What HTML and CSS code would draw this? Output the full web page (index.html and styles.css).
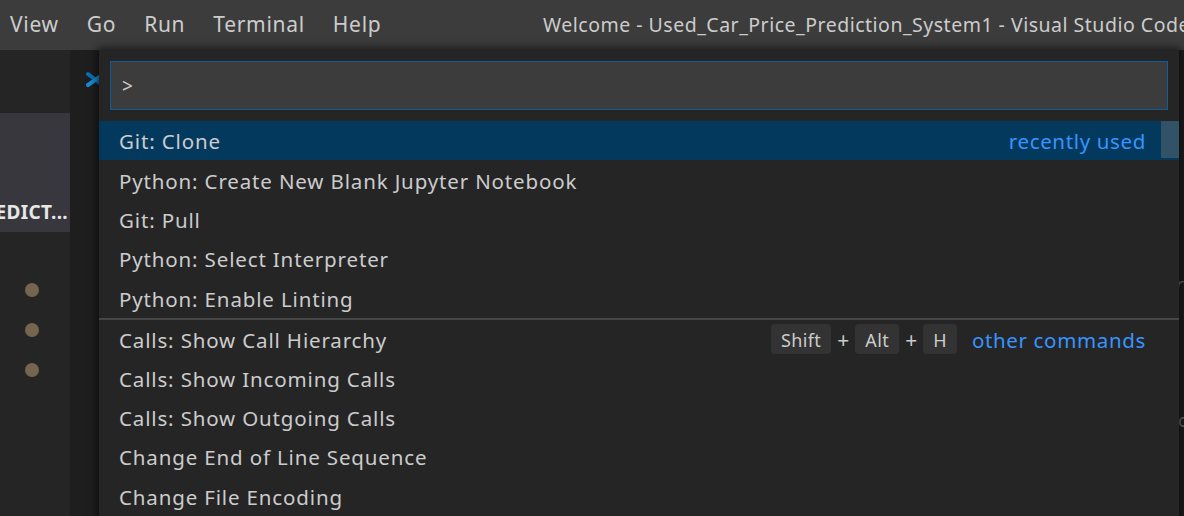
FILE: index.html
```html
<!DOCTYPE html>
<html>
<head>
<meta charset="utf-8">
<link rel="stylesheet" href="styles.css">
</head>
<body>
<div class="titlebar">
  <nav class="menu">
    <span class="menu-item">View</span>
    <span class="menu-item">Go</span>
    <span class="menu-item">Run</span>
    <span class="menu-item">Terminal</span>
    <span class="menu-item">Help</span>
  </nav>
  <div class="title">Welcome - Used_Car_Price_Prediction_System1 - Visual Studio Code</div>
</div>
<div class="main">
  <aside class="sidebar">
    <div class="folder-tab"><span class="folder-name">USED_CAR_PRICE_PREDICT...</span></div>
    <div class="dots">
      <span class="dot"></span>
      <span class="dot"></span>
      <span class="dot"></span>
    </div>
  </aside>
  <section class="editor">
    <svg class="logo" width="16" height="18" viewBox="0 0 16 18">
      <line x1="2" y1="3" x2="15" y2="13" stroke="#0b6db8" stroke-width="4" stroke-linecap="round"/>
      <line x1="2" y1="14" x2="15" y2="5" stroke="#1a8ad4" stroke-width="4" stroke-linecap="round"/>
    </svg>
    <span class="ghost g1">r</span>
    <span class="ghost g2">c</span>
  </section>
  <div class="palette">
    <div class="input-wrap">
      <div class="input">&gt;</div>
    </div>
    <ul class="list">
      <li class="row selected"><span class="label">Git: Clone</span><span class="meta">recently used</span><span class="slider"></span></li>
      <li class="row"><span class="label">Python: Create New Blank Jupyter Notebook</span></li>
      <li class="row"><span class="label">Git: Pull</span></li>
      <li class="row"><span class="label">Python: Select Interpreter</span></li>
      <li class="row"><span class="label">Python: Enable Linting</span></li>
      <li class="row sep"><span class="label">Calls: Show Call Hierarchy</span>
        <span class="keys"><kbd>Shift</kbd><span class="plus">+</span><kbd>Alt</kbd><span class="plus">+</span><kbd>H</kbd></span>
        <span class="meta">other commands</span></li>
      <li class="row"><span class="label">Calls: Show Incoming Calls</span></li>
      <li class="row"><span class="label">Calls: Show Outgoing Calls</span></li>
      <li class="row"><span class="label">Change End of Line Sequence</span></li>
      <li class="row"><span class="label">Change File Encoding</span></li>
    </ul>
  </div>
</div>
</body>
</html>
```
FILE: styles.css
```css
* { box-sizing: border-box; }
html, body { margin: 0; padding: 0; }
body {
  width: 1184px;
  height: 516px;
  overflow: hidden;
  background: #1e1e1e;
  font-family: "Noto Sans", "Open Sans", sans-serif;
  color: #cccccc;
  position: relative;
}
.titlebar {
  height: 50px;
  background: #3c3c3c;
  display: flex;
  align-items: center;
  white-space: nowrap;
  overflow: hidden;
  padding-bottom: 2px;
}
.menu {
  display: flex;
  width: 543px;
  flex-shrink: 0;
  padding-left: 10px;
  gap: 28px;
}
.menu-item {
  font-size: 21px;
  letter-spacing: 0.7px;
  color: #cccccc;
}
.title {
  font-size: 19.5px;
  letter-spacing: 0.5px;
  color: #cccccc;
}
.main {
  display: flex;
  height: 466px;
}
.sidebar {
  width: 70px;
  background: #252526;
  padding-top: 63px;
  overflow: hidden;
}
.folder-tab {
  height: 119px;
  background: #37373d;
  display: flex;
  align-items: flex-end;
  justify-content: flex-end;
  padding-bottom: 7px;
  overflow: hidden;
}
.folder-name {
  font-size: 19px;
  font-weight: 700;
  letter-spacing: 0.3px;
  color: #e7e7e7;
  white-space: nowrap;
  margin-right: 2px;
}
.dots {
  display: flex;
  flex-direction: column;
  align-items: center;
  gap: 26px;
  padding-top: 51px;
  padding-right: 6px;
}
.dot {
  width: 14px;
  height: 14px;
  border-radius: 50%;
  background: #75654f;
}
.editor {
  flex: 1;
  background: #1e1e1e;
  position: relative;
}
.logo {
  position: absolute;
  left: 16px;
  top: 21px;
}
.ghost {
  position: absolute;
  font-size: 18px;
  color: #6a6a6a;
}
.g1 { left: 1106px; top: 222px; font-style: italic; }
.g2 { left: 1108px; top: 358px; }
.palette {
  position: absolute;
  left: 99px;
  top: 50px;
  width: 1080px;
  height: 470px;
  background: #252526;
  box-shadow: 0 0 8px 2px rgba(0,0,0,0.6);
}
.input-wrap {
  padding: 11px;
}
.input {
  height: 49px;
  background: #3c3c3c;
  border: 1px solid #0f5d94;
  font-size: 19px;
  color: #cccccc;
  padding-left: 11px;
  display: flex;
  align-items: center;
}
.list {
  list-style: none;
  margin: 0;
  padding: 0;
}
.row {
  height: 39.4px;
  display: flex;
  align-items: center;
  padding-left: 20px;
  padding-right: 33px;
  font-size: 20.5px;
  letter-spacing: 0.85px;
  color: #cccccc;
  white-space: nowrap;
  position: relative;
  padding-top: 1px;
}
.row.selected {
  background: #04395e;
}
.row.sep {
  border-top: 2px solid #464647;
  height: 40.5px;
}
.label { flex: 1; }
.meta {
  color: #3794ff;
  font-size: 20.5px;
  letter-spacing: 0.65px;
}
.slider {
  position: absolute;
  right: 0;
  top: 0;
  width: 18px;
  height: 37px;
  background: rgba(121,121,121,0.4);
}
.keys {
  display: flex;
  align-items: center;
  margin-right: 15px;
}
kbd {
  font-family: inherit;
  font-size: 18px;
  letter-spacing: 0.4px;
  background: #333333;
  color: #cccccc;
  border-radius: 4px;
  height: 31px;
  padding: 0 10px;
  display: flex;
  align-items: center;
  box-shadow: inset 0 -1px 0 rgba(0,0,0,0.3);
}
.plus {
  font-size: 21px;
  letter-spacing: 0;
  margin: 0 6px;
}
```
